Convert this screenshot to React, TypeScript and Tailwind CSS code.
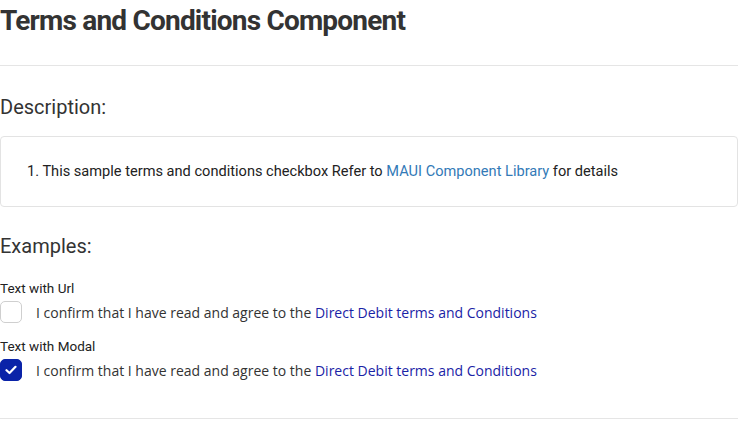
import React from "react";

function Check({ checked }: { checked?: boolean }) {
  return (
    <span
      className={
        "flex h-[22px] w-[22px] shrink-0 items-center justify-center rounded-[5px] border " +
        (checked ? "border-[#0a23a8] bg-[#0a23a8]" : "border-[#cfcfcf] bg-white")
      }
    >
      {checked && (
        <svg width="12" height="10" viewBox="0 0 12 10" fill="none">
          <path d="M1.5 5.2 4.5 8 10.5 1.8" stroke="white" strokeWidth="2.2" strokeLinecap="round" strokeLinejoin="round" />
        </svg>
      )}
    </span>
  );
}

function Row({ label, checked }: { label: string; checked?: boolean }) {
  return (
    <div className="flex flex-col">
      <div className="text-[13.5px] leading-[18px] text-[#222] font-['Roboto',sans-serif]">{label}</div>
      <div className="mt-[4px] flex items-center gap-[14px]">
        <Check checked={checked} />
        <span className="text-[14px] text-[#333] font-['Open_Sans',sans-serif]">
          I confirm that I have read and agree to the{" "}
          <a className="text-[#1a23a6]">Direct Debit terms and Conditions</a>
        </span>
      </div>
    </div>
  );
}

export default function App() {
  return (
    <div className="w-[738px] h-[444px] overflow-hidden bg-white text-[#333] font-['Roboto',sans-serif]">
      <h1 className="pt-[4px] text-[28px] font-bold leading-[34px] text-[#333] tracking-[-0.8px]">
        Terms and Conditions Component
      </h1>
      <div className="mt-[27px] border-t border-[#e5e5e5]" />
      <h2 className="mt-[28px] text-[20px] leading-[26px] text-[#333]">Description:</h2>
      <div className="mt-[16px] h-[71px] rounded-[4px] border border-[#e3e3e3] flex items-center pl-[26px]">
        <span className="text-[14.6px] text-[#222]">
          1. This sample terms and conditions checkbox Refer to{" "}
          <a className="text-[#337ab7]">MAUI Component Library</a> for details
        </span>
      </div>
      <h2 className="mt-[26px] text-[20px] leading-[26px] text-[#333]">Examples:</h2>
      <div className="mt-[20px] flex flex-col gap-[14px]">
        <Row label="Text with Url" />
        <Row label="Text with Modal" checked />
      </div>
      <div className="mt-[37px] border-t border-[#e5e5e5]" />
    </div>
  );
}
